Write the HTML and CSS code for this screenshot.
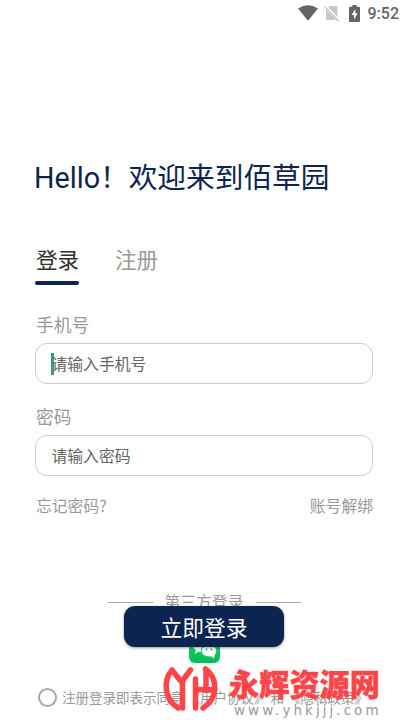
FILE: index.html
```html
<!DOCTYPE html>
<html lang="zh-CN">
<head>
<meta charset="utf-8">
<title>登录</title>
<link rel="stylesheet" href="styles.css">
</head>
<body>
<div class="screen">
  <header class="status">
    <svg class="wifi" width="20" height="16" viewBox="0 0 20 16"><path d="M0 3.5Q10-3 20 3.5L10 15.8Z" fill="#646464"/></svg>
    <svg class="sim" width="16" height="17" viewBox="0 0 16 17"><path d="M5.500 1H13.500V15H2V4.500Z" fill="#c9c9c9"/><path d="M1 1L15 16" stroke="#fff" stroke-width="3"/><path d="M.7 1.700L14.300 16" stroke="#bdbdbd" stroke-width="1.200"/></svg>
    <svg class="battery" width="11" height="17" viewBox="0 0 11 17"><path d="M3.300 0H7.700V1.700H10Q11 1.700 11 2.700V16Q11 17 10 17H1Q0 17 0 16V2.700Q0 1.700 1 1.700H3.300Z" fill="#646464"/><path d="M6.300 4L2.500 10H5V14.500L8.700 8.300H6.300Z" fill="#fff"/></svg>
    <span class="clock">9:52</span>
  </header>
  <main class="content">
    <h1 class="title">Hello！欢迎来到佰草园</h1>
    <nav class="tabs"><span class="tab active">登录</span><span class="tab">注册</span></nav>
    <form class="form">
      <label class="label">手机号</label>
      <div class="field focused">请输入手机号</div>
      <label class="label second">密码</label>
      <div class="field">请输入密码</div>
    </form>
    <div class="links"><span>忘记密码?</span><span>账号解绑</span></div>
    <div class="divider"><span>第三方登录</span></div>
    <div class="social">
      <svg width="32" height="32" viewBox="0 0 32 32"><defs><linearGradient id="g" x2="0" y2="1"><stop stop-color="#20d873"/><stop offset="1" stop-color="#05bd57"/></linearGradient></defs><rect width="31" height="32" rx="6" fill="url(#g)"/><ellipse cx="12" cy="14" rx="8" ry="7" fill="#e8fff0"/><path d="M7 18L6 23L12 19Z" fill="#e8fff0"/><ellipse cx="20" cy="20" rx="7.800" ry="6" fill="#fff" stroke="#10c963"/><path d="M21 24.500L25 27.500L26 23Z" fill="#fff"/><circle cx="17.500" cy="18.500" r="1" fill="#10c963"/><circle cx="22.500" cy="18.500" r="1" fill="#10c963"/></svg>
      <button class="submit" type="button">立即登录</button>
    </div>
    <div class="terms"><i class="radio"></i><span>注册登录即表示同意</span><span class="doc">《用户协议》</span><span class="doc">和</span><span class="doc">《隐私政策》</span></div>
  </main>
  <div class="brand">
    <svg width="57" height="50" viewBox="0 0 57 50" fill="none" stroke="#fb4548" stroke-width="5.500" stroke-linecap="round" stroke-linejoin="round"><path d="M16 45C2 36 1 17 10 7L19.500 19L28.500 7"/><path d="M20.500 19V45"/><path d="M33.500 16V45"/><path d="M34 26.500H50"/><path d="M43.500 6C56.500 16 56.500 35 41 45"/><path d="M44 8V27"/></svg>
    <div class="brand-text"><strong>永辉资源网</strong><small>www.yhkjjj.com</small></div>
  </div>
</div>
</body>
</html>
```
FILE: styles.css
```css
* { box-sizing: border-box; }
body {
  margin: 0;
  background: #fff;
  font-family: "Noto Sans CJK SC", sans-serif;
  color: #999;
}
.screen { position: relative; width: 408px; height: 725px; overflow: hidden; }
.status {
  display: flex;
  align-items: center;
  justify-content: flex-end;
  height: 28px;
  padding-right: 9px;
}
.wifi { margin-top: -2px; }
.sim { margin-left: 6px; margin-top: -2px; }
.battery { margin-left: 9px; margin-top: -2px; }
.clock { margin-left: 8px; font: 500 16px/20px Roboto, sans-serif; color: #646464; }
.content { padding: 130px 35px 0; }
.title { margin: 0 0 0 -1px; height: 40px; font-family: Roboto, "Noto Sans CJK SC", sans-serif; font-size: 28.700px; line-height: 40px; font-weight: 400; color: #0c2450; white-space: nowrap; }
.tabs { display: flex; gap: 35px; margin-top: 45px; height: 42px; }
.tab { width: 44px; padding-left: 1px; font-size: 21.600px; line-height: 32px; white-space: nowrap; }
.tab.active { color: #303030; }
.tab.active::after { content: ""; display: block; height: 4px; margin: 6px 0 0 -1px; border-radius: 2px; background: #0c2450; }
.form { margin-top: 27px; }
.label { display: block; height: 24px; padding-left: 1px; margin-bottom: 7px; font-size: 17.800px; line-height: 24px; }
.second { margin-top: 20px; }
.field {
  position: relative;
  width: 338px;
  height: 41px;
  border: 1px solid #ccc;
  border-radius: 12px;
  padding-left: 15.500px;
  font-size: 15.800px;
  line-height: 40px;
  color: #666;
}
.focused::before { content: ""; position: absolute; left: 15px; top: 9px; width: 3px; height: 22px; background: #15877b; opacity: .85; }
.links { display: flex; justify-content: space-between; height: 24px; margin-top: 18px; padding-left: 1px; font-size: 15.800px; line-height: 24px; }
.divider { display: flex; align-items: center; justify-content: center; gap: 12px; margin-top: 72px; font-size: 15.800px; line-height: 24px; }
.divider::before, .divider::after { content: ""; width: 45px; height: 1px; background: #aaa; }
.social { position: relative; height: 48px; padding: 17px 0 0 154px; }
.social svg { display: block; }
.submit {
  position: absolute;
  left: 89px;
  top: -8px;
  width: 160px;
  height: 41px;
  border: 0;
  border-radius: 11px;
  padding: 0;
  background: #0c2450;
  color: #fff;
  font: 400 21.800px/40px "Noto Sans CJK SC", sans-serif;
  box-shadow: 0 1px 3px rgba(0, 0, 0, .4);
}
.terms { display: flex; align-items: center; margin: 23px 0 0 3px; height: 24px; font-size: 13.500px; white-space: nowrap; }
.radio { flex: none; width: 19px; height: 19px; margin-right: 5px; border: 2px solid #aaa; border-radius: 50%; }
.doc { margin-left: 3px; }
.brand { position: absolute; left: 162px; top: 663px; display: flex; }
.brand-text { display: flex; flex-direction: column; margin-left: 10px; white-space: nowrap; }
.brand strong { font-size: 30.200px; line-height: 40px; font-weight: 900; color: #fb4548; -webkit-text-stroke: .4px #fb4548; }
.brand small { margin: -1px 0 0 5px; font: 13.500px/16px "DejaVu Sans", sans-serif; letter-spacing: 3.050px; color: #999; }
```
